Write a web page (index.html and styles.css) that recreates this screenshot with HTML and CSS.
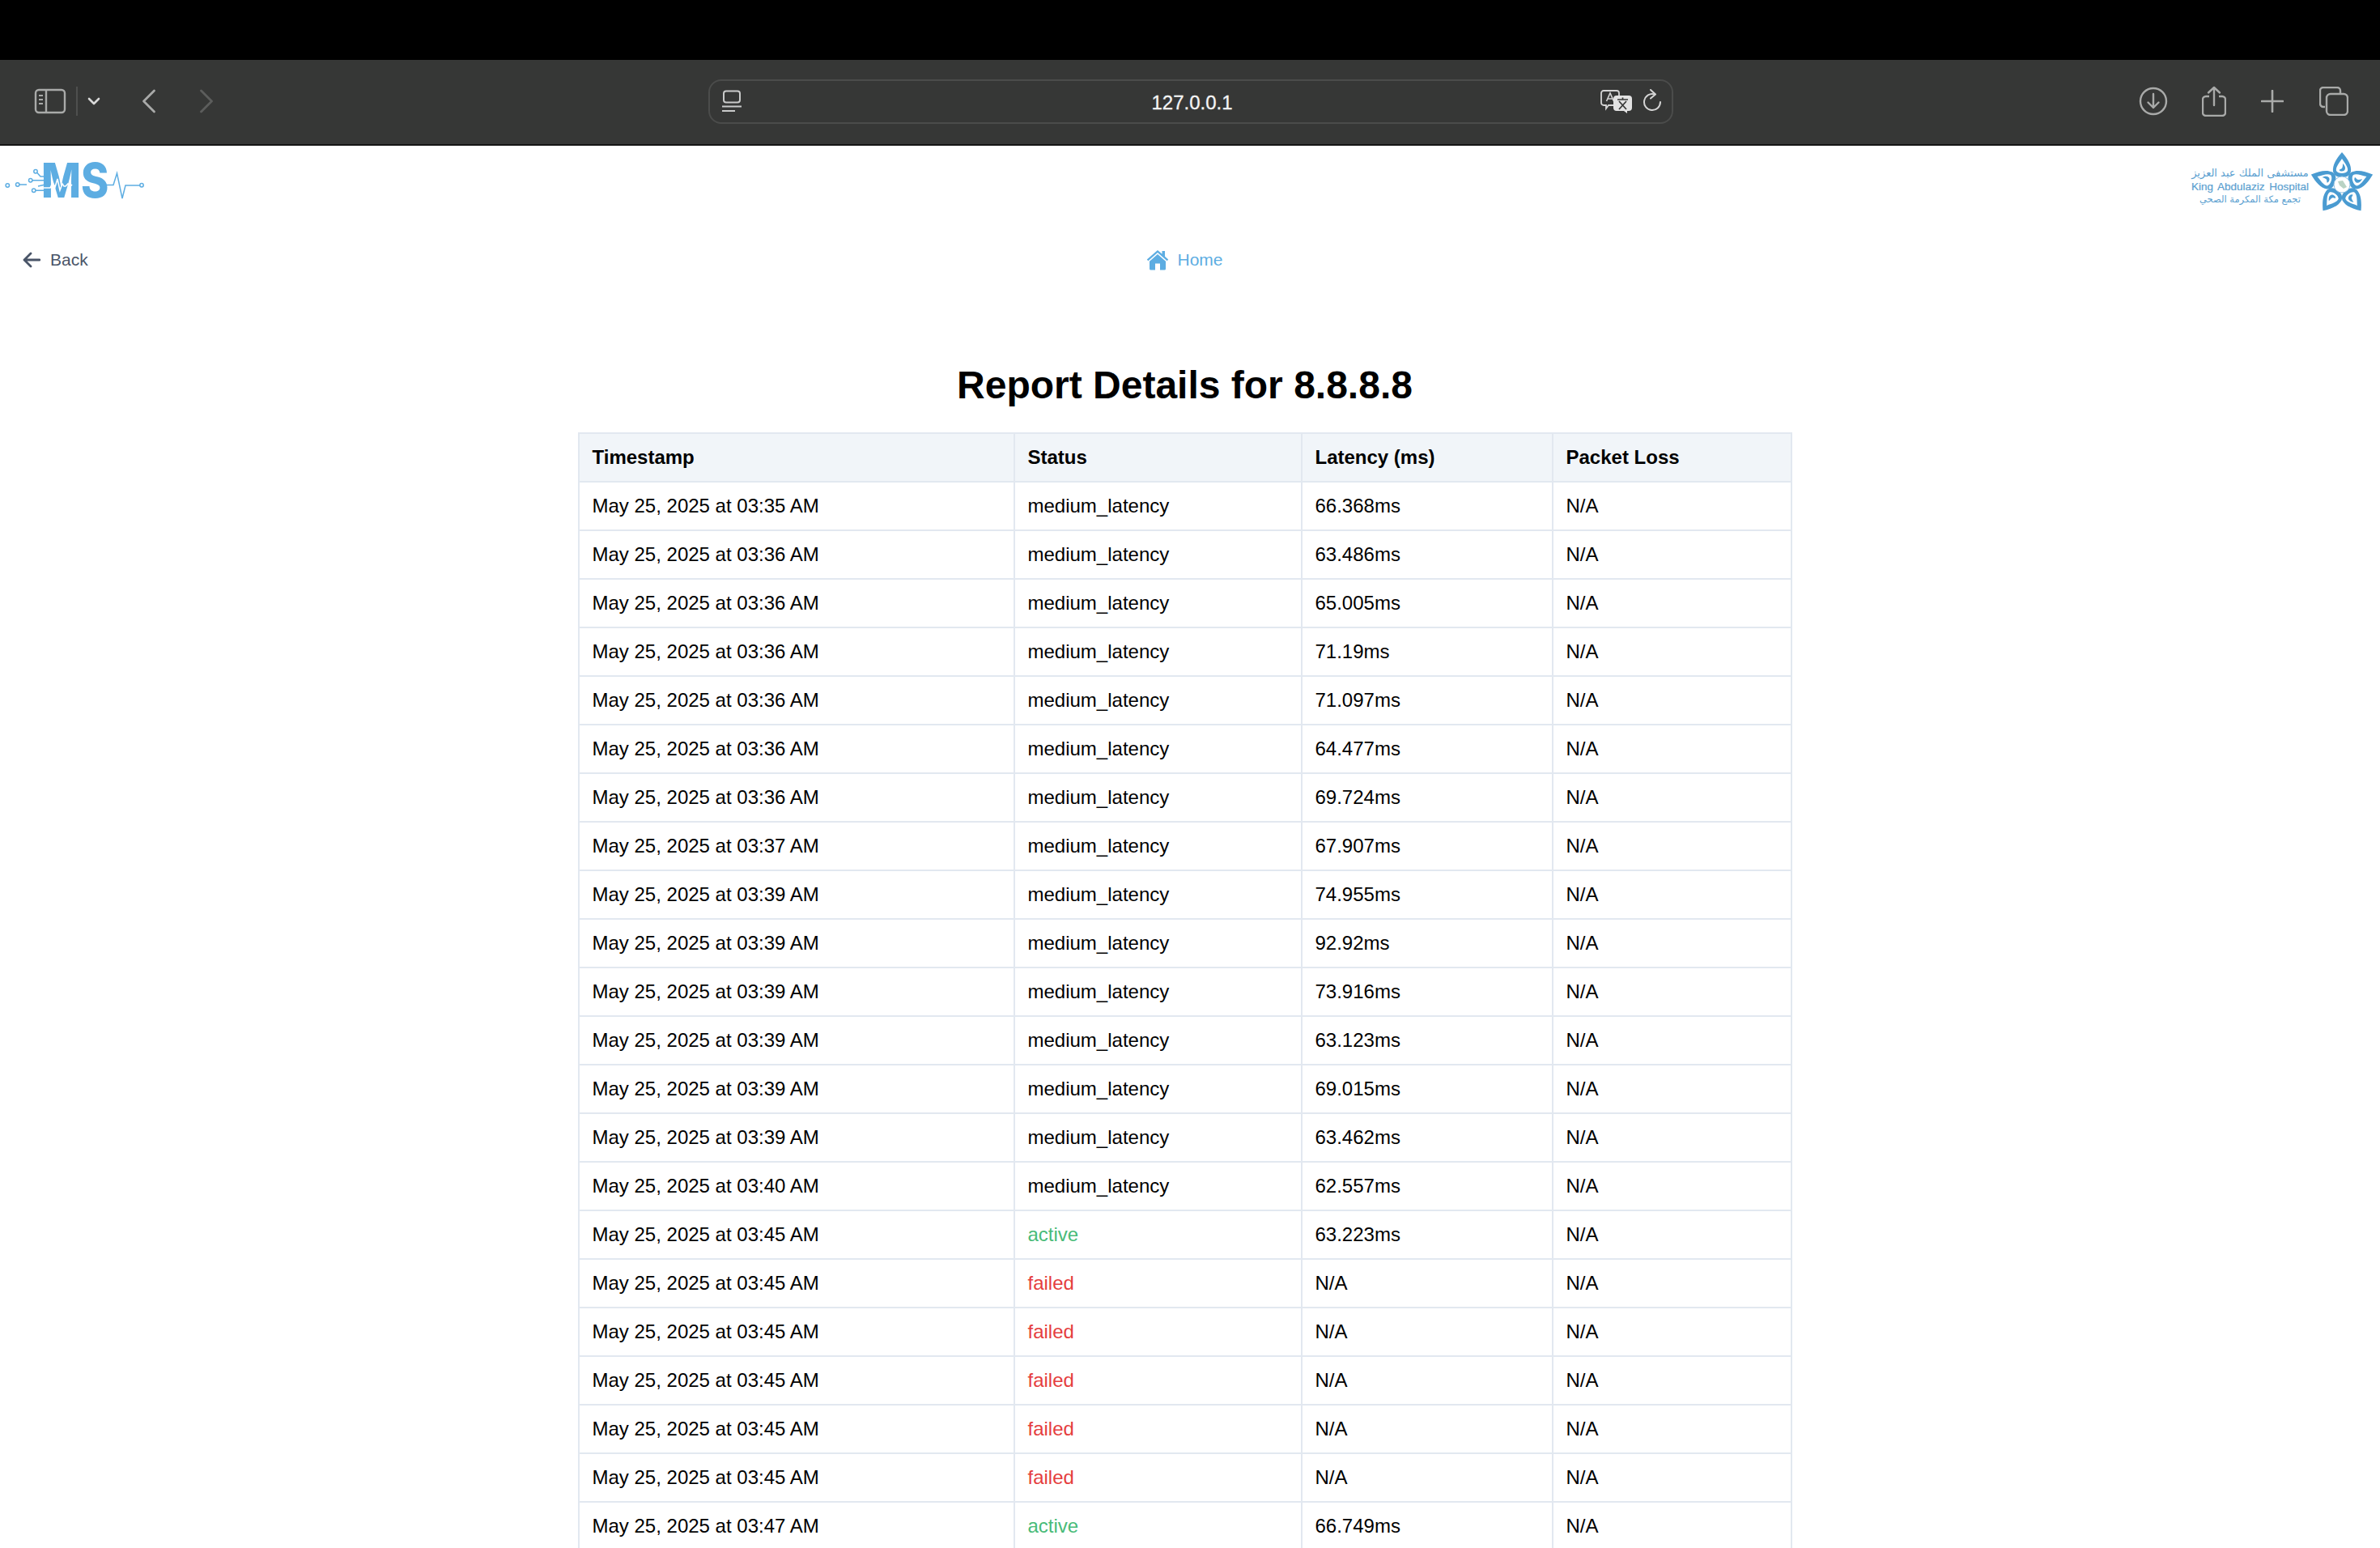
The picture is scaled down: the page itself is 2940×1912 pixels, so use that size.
FILE: index.html
```html
<!DOCTYPE html>
<html lang="en">
<head>
  <meta charset="UTF-8">
  <title>Report Details for 8.8.8.8</title>
  <link rel="stylesheet" href="styles.css">
</head>
<body>

<div class="black-bar"></div>

<!-- browser toolbar -->
<div class="toolbar">
  <div class="toolbar-left">
    <svg class="tb-icon sidebar-icon" viewBox="0 0 40 32" width="40" height="32">
      <rect x="2" y="2" width="36" height="28" rx="4" fill="none" stroke="#a9aaa9" stroke-width="2.4"/>
      <path d="M15 2v28" stroke="#a9aaa9" stroke-width="2.4"/>
      <path d="M6 9h5M6 14h5M6 19h5" stroke="#a9aaa9" stroke-width="2"/>
    </svg>
    <span class="tb-divider"></span>
    <svg class="tb-icon chevron-icon" viewBox="0 0 16 10" width="16" height="10">
      <path d="M2 2l6 6 6-6" fill="none" stroke="#d8d8d8" stroke-width="2.6" stroke-linecap="round" stroke-linejoin="round"/>
    </svg>
    <svg class="tb-icon back-icon" viewBox="0 0 18 30" width="18" height="30">
      <path d="M15.5 2L2.5 15l13 13" fill="none" stroke="#a9aaa9" stroke-width="2.8" stroke-linecap="round" stroke-linejoin="round"/>
    </svg>
    <svg class="tb-icon forward-icon" viewBox="0 0 18 30" width="18" height="30">
      <path d="M2.5 2l13 13-13 13" fill="none" stroke="#5c5d5c" stroke-width="2.8" stroke-linecap="round" stroke-linejoin="round"/>
    </svg>
  </div>

  <div class="url-field">
    <svg class="page-icon" viewBox="0 0 26 28" width="26" height="28">
      <rect x="3" y="1.5" width="20" height="14" rx="3" fill="none" stroke="#c9caca" stroke-width="2"/>
      <path d="M1 20.5h24" stroke="#c9caca" stroke-width="2"/>
      <path d="M1 26h16" stroke="#c9caca" stroke-width="2"/>
    </svg>
    <span class="url-text">127.0.0.1</span>
    <svg class="translate-icon" viewBox="0 0 40 30" width="40" height="30">
      <path d="M4 2h16a3 3 0 0 1 3 3v12a3 3 0 0 1-3 3H10l-3 4v-4H4a3 3 0 0 1-3-3V5a3 3 0 0 1 3-3z" fill="none" stroke="#d4d4d4" stroke-width="1.8"/>
      <path d="M7.500 15l4.500-10 4.500 10M9 12h6" fill="none" stroke="#d4d4d4" stroke-width="1.600"/>
      <path d="M20 8h15a4 4 0 0 1 4 4v11a4 4 0 0 1-4 4h-2v3l-4-3h-9a4 4 0 0 1-4-4V12a4 4 0 0 1 4-4z" fill="#e2e2e2"/>
      <path d="M21 13h13M27.500 10.500v3M23 25l9-10M32 25l-9-10" fill="none" stroke="#363736" stroke-width="1.700"/>
    </svg>
    <svg class="reload-icon" viewBox="0 0 24 30" width="24" height="30">
      <path d="M15 6.500a10 10 0 1 0 7 9.500" fill="none" stroke="#d4d4d4" stroke-width="2" stroke-linecap="round"/>
      <path d="M10 1l6 5.500-6 5" fill="none" stroke="#d4d4d4" stroke-width="2" stroke-linecap="round" stroke-linejoin="round"/>
    </svg>
  </div>

  <div class="toolbar-right">
    <svg viewBox="0 0 36 36" width="36" height="36">
      <circle cx="18" cy="18" r="16" fill="none" stroke="#a9aaa9" stroke-width="2.4"/>
      <path d="M18 9v17M11.500 19.500l6.500 6.500 6.500-6.500" fill="none" stroke="#a9aaa9" stroke-width="2.400" stroke-linecap="round" stroke-linejoin="round"/>
    </svg>
    <svg class="share-icon" viewBox="0 0 30 38" width="30" height="38">
      <path d="M9 13H5a4 4 0 0 0-4 4v16a4 4 0 0 0 4 4h20a4 4 0 0 0 4-4V17a4 4 0 0 0-4-4h-4" fill="none" stroke="#a9aaa9" stroke-width="2.400"/>
      <path d="M15 24V2M8 8.500L15 2l7 6.500" fill="none" stroke="#a9aaa9" stroke-width="2.400" stroke-linecap="round" stroke-linejoin="round"/>
    </svg>
    <svg class="plus-icon" viewBox="0 0 28 28" width="28" height="28">
      <path d="M14 1v26M1 14h26" stroke="#a9aaa9" stroke-width="2.600" stroke-linecap="round"/>
    </svg>
    <svg class="tabs-icon" viewBox="0 0 36 36" width="36" height="36">
      <path d="M7 25H5a4 4 0 0 1-4-4V5a4 4 0 0 1 4-4h17a4 4 0 0 1 4 4v3" fill="none" stroke="#a9aaa9" stroke-width="2.400"/>
      <rect x="9" y="9" width="26" height="26" rx="5" fill="none" stroke="#a9aaa9" stroke-width="2.400"/>
    </svg>
  </div>
</div>

<!-- page -->
<header class="logos">
  <svg class="ms-logo" viewBox="0 180 180 88" width="180" height="88">
    <text class="ms-text" transform="translate(51 244) scale(.88 1)">MS</text>
    <path d="M54 232h8l3-6 3 5 3-10 3 14 3-8 2 3h2l3-3 3 3 2-2" fill="none" stroke="#fff" stroke-width="1.600"/>
    <g fill="none" stroke="#5dade2" stroke-width="1.500">
      <circle cx="9.300" cy="229" r="2.200"/>
      <circle cx="21.700" cy="228" r="2.200"/>
      <circle cx="37.700" cy="222.700" r="2.200"/>
      <circle cx="44" cy="211.700" r="2.200"/>
      <circle cx="41.700" cy="235.300" r="2.200"/>
      <circle cx="175" cy="228.700" r="2.200"/>
      <path d="M24 228h9M40 222.700h14M46 213.500l4 4.500h7M44 235.300h10M47 230l9-2"/>
      <path d="M131 228.500h9l4.500-14.500 6.500 31 4-16h18"/>
    </g>
  </svg>

  <div class="hospital">
    <div class="hospital-name">
      <div class="name-ar">مستشفى الملك عبد العزيز</div>
      <div class="name-en">King Abdulaziz Hospital</div>
      <div class="name-sub">تجمع مكة المكرمة الصحي</div>
    </div>
    <svg class="star" viewBox="-38 -40 76 76" width="76" height="76">
      <defs>
        <g id="petal">
          <path d="M0 -40C7 -32 12 -24 11 -16C9 -10 5 -9 0 -9C-5 -9 -9 -10 -11 -16C-12 -24 -7 -32 0 -40Z" fill="#4a9bd1"/>
          <path d="M0 -32C4 -26 8 -21 7 -17C5 -13 -5 -13 -7 -17C-8 -21 -4 -26 0 -32Z" fill="#fff"/>
          <path d="M1 -26C4 -23 5 -20 3 -17.500C1 -16 -2 -16 -3.500 -18C-3 -19 -1 -19 0 -20C1 -22 1 -24 1 -26Z" fill="#4a9bd1"/>
        </g>
      </defs>
      <use href="#petal"/>
      <use href="#petal" transform="rotate(72)"/>
      <use href="#petal" transform="rotate(144)"/>
      <use href="#petal" transform="rotate(216)"/>
      <use href="#petal" transform="rotate(288)"/>
      <circle r="10" fill="#fff" stroke="#8fc0e2" stroke-width="1"/>
      <path d="M-5 -4L1 -5L6 3L2 5L-3 1Z" fill="#b9d3c4"/>
    </svg>
  </div>
</header>

<div class="content">
  <nav class="page-nav">
    <a class="back-link" href="#">
      <svg viewBox="0 0 22 20" width="22" height="20">
        <path d="M10 2L2 10l8 8M2.500 10H21" fill="none" stroke="#4a5568" stroke-width="2.800" stroke-linecap="round" stroke-linejoin="round"/>
      </svg>
      Back
    </a>
    <a class="home-link" href="#">
      <svg viewBox="0 0 28 26" width="28" height="26">
        <path d="M14 1L0.800 12.500 2.300 14.200 14 4 25.700 14.200 27.200 12.500 23 8.800V2H19.500V5.800Z" fill="#5dade2"/>
        <path d="M14 6L4 14.700V24A1.500 1.500 0 0 0 5.500 25.500H11V17.500H17V25.500H22.500A1.500 1.500 0 0 0 24 24V14.700Z" fill="#5dade2"/>
      </svg>
      Home
    </a>
  </nav>

  <h1 class="report-title">Report Details for 8.8.8.8</h1>

  <table class="report-table">
    <colgroup>
      <col class="col-time">
      <col class="col-status">
      <col class="col-latency">
      <col class="col-loss">
    </colgroup>
    <thead>
      <tr><th>Timestamp</th><th>Status</th><th>Latency (ms)</th><th>Packet Loss</th></tr>
    </thead>
    <tbody>
      <tr><td>May 25, 2025 at 03:35 AM</td><td>medium_latency</td><td>66.368ms</td><td>N/A</td></tr>
      <tr><td>May 25, 2025 at 03:36 AM</td><td>medium_latency</td><td>63.486ms</td><td>N/A</td></tr>
      <tr><td>May 25, 2025 at 03:36 AM</td><td>medium_latency</td><td>65.005ms</td><td>N/A</td></tr>
      <tr><td>May 25, 2025 at 03:36 AM</td><td>medium_latency</td><td>71.19ms</td><td>N/A</td></tr>
      <tr><td>May 25, 2025 at 03:36 AM</td><td>medium_latency</td><td>71.097ms</td><td>N/A</td></tr>
      <tr><td>May 25, 2025 at 03:36 AM</td><td>medium_latency</td><td>64.477ms</td><td>N/A</td></tr>
      <tr><td>May 25, 2025 at 03:36 AM</td><td>medium_latency</td><td>69.724ms</td><td>N/A</td></tr>
      <tr><td>May 25, 2025 at 03:37 AM</td><td>medium_latency</td><td>67.907ms</td><td>N/A</td></tr>
      <tr><td>May 25, 2025 at 03:39 AM</td><td>medium_latency</td><td>74.955ms</td><td>N/A</td></tr>
      <tr><td>May 25, 2025 at 03:39 AM</td><td>medium_latency</td><td>92.92ms</td><td>N/A</td></tr>
      <tr><td>May 25, 2025 at 03:39 AM</td><td>medium_latency</td><td>73.916ms</td><td>N/A</td></tr>
      <tr><td>May 25, 2025 at 03:39 AM</td><td>medium_latency</td><td>63.123ms</td><td>N/A</td></tr>
      <tr><td>May 25, 2025 at 03:39 AM</td><td>medium_latency</td><td>69.015ms</td><td>N/A</td></tr>
      <tr><td>May 25, 2025 at 03:39 AM</td><td>medium_latency</td><td>63.462ms</td><td>N/A</td></tr>
      <tr><td>May 25, 2025 at 03:40 AM</td><td>medium_latency</td><td>62.557ms</td><td>N/A</td></tr>
      <tr><td>May 25, 2025 at 03:45 AM</td><td class="active">active</td><td>63.223ms</td><td>N/A</td></tr>
      <tr><td>May 25, 2025 at 03:45 AM</td><td class="failed">failed</td><td>N/A</td><td>N/A</td></tr>
      <tr><td>May 25, 2025 at 03:45 AM</td><td class="failed">failed</td><td>N/A</td><td>N/A</td></tr>
      <tr><td>May 25, 2025 at 03:45 AM</td><td class="failed">failed</td><td>N/A</td><td>N/A</td></tr>
      <tr><td>May 25, 2025 at 03:45 AM</td><td class="failed">failed</td><td>N/A</td><td>N/A</td></tr>
      <tr><td>May 25, 2025 at 03:45 AM</td><td class="failed">failed</td><td>N/A</td><td>N/A</td></tr>
      <tr><td>May 25, 2025 at 03:47 AM</td><td class="active">active</td><td>66.749ms</td><td>N/A</td></tr>
    </tbody>
  </table>
</div>

</body>
</html>
```

FILE: styles.css
```css
html, body {
  height: 100%;
}
body {
  margin: 0;
  overflow: hidden;
  background: #fff;
  color: #000;
  font-family: "Liberation Sans", Arial, sans-serif;
}
a {
  text-decoration: none;
}

.black-bar {
  height: 74px;
  background: #000;
}

/* browser toolbar */
.toolbar {
  display: grid;
  grid-template-columns: 1fr 1190px 1fr;
  align-items: center;
  height: 106px;
  padding: 0 39px 2px 42px;
  box-sizing: border-box;
  background: #363736;
  border-bottom: 2px solid #141414;
}
.toolbar-left,
.toolbar-right {
  display: flex;
  align-items: center;
}
.toolbar-right {
  justify-content: flex-end;
}
.tb-divider {
  width: 2px;
  height: 36px;
  margin: 0 12px;
  background: #4e4f4e;
}
.back-icon {
  margin-left: 51px;
}
.forward-icon {
  margin-left: 53px;
}
.share-icon {
  margin-left: 42px;
}
.plus-icon {
  margin-left: 43px;
}
.tabs-icon {
  margin-left: 44px;
}
.url-field {
  display: flex;
  align-items: center;
  height: 55px;
  margin-left: -2px;
  padding: 0 12px 0 14px;
  box-sizing: border-box;
  border: 2px solid #4b4c4b;
  border-radius: 16px;
}
.url-text {
  flex: 1;
  padding: 3px 0 0 52px;
  text-align: center;
  font-size: 24px;
  color: #f4f4f4;
  -webkit-text-stroke: 0.3px #f4f4f4;
}
.reload-icon {
  margin-left: 12px;
}

/* logos */
.logos {
  display: flex;
  justify-content: space-between;
  align-items: center;
  height: 88px;
  padding-right: 9px;
}
.ms-text {
  font-family: Inter, "Liberation Sans", sans-serif;
  font-size: 59px;
  font-weight: 800;
  fill: #5dade2;
}
.hospital {
  display: flex;
  align-items: center;
  gap: 3px;
}
.hospital-name {
  padding-top: 10px;
  color: #5b9fd0;
  text-align: center;
  font-family: "DejaVu Sans", sans-serif;
}
.star {
  margin-top: 4px;
}
.name-ar {
  font-size: 13px;
  line-height: 18px;
}
.name-sub {
  font-size: 11.5px;
  line-height: 14px;
}
.name-en {
  font-family: "Liberation Sans", sans-serif;
  font-size: 13.5px;
  line-height: 16px;
  word-spacing: 2px;
  -webkit-text-stroke: 0.2px #5b9fd0;
}

/* page */
.content {
  padding-right: 13px;
}
.page-nav {
  display: grid;
  grid-template-columns: 1fr auto 1fr;
  align-items: center;
  height: 36px;
  margin-top: 35px;
  padding: 0 28px;
  font-size: 21px;
}
.back-link,
.home-link {
  display: flex;
  align-items: center;
}
.back-link {
  gap: 12px;
  color: #4a5568;
}
.home-link {
  gap: 10px;
  color: #5dade2;
}
.report-title {
  margin: 109px 0 30px;
  text-align: center;
  font-size: 48px;
  line-height: 56px;
  font-weight: 700;
}
.report-table {
  width: 1498px;
  margin: 0 auto;
  table-layout: fixed;
  border-collapse: collapse;
  font-size: 24px;
}
.col-time {
  width: 538px;
}
.col-status {
  width: 355px;
}
.col-latency {
  width: 310px;
}
.col-loss {
  width: 295px;
}
.report-table th,
.report-table td {
  height: 60px;
  padding: 0 16px;
  box-sizing: border-box;
  border: 2px solid #e2e8f0;
  text-align: left;
}
.report-table th {
  background: #f1f5f9;
  font-weight: 700;
}
.active {
  color: #48bb78;
}
.failed {
  color: #e53e3e;
}
```
